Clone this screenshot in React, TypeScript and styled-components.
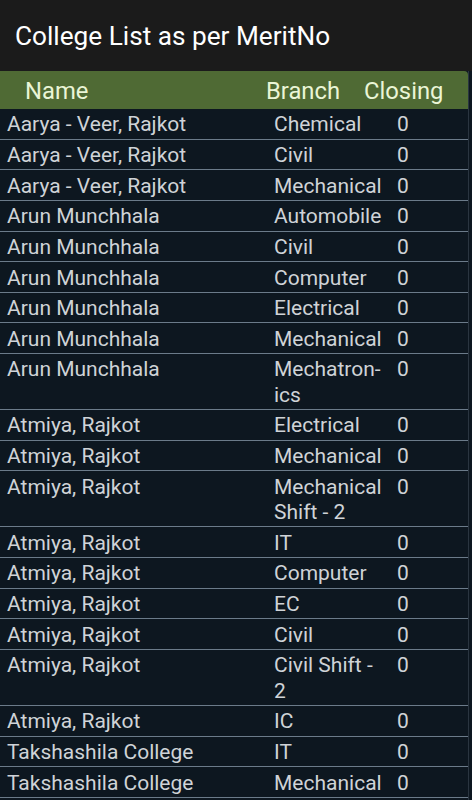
import React from "react";
import styled, { createGlobalStyle } from "styled-components";

const Global = createGlobalStyle`
  html, body { margin: 0; padding: 0; background: #0d1720; }
  body { font-family: Roboto, "Noto Sans", sans-serif; }
`;

const Page = styled.div`
  width: 472px;
  height: 800px;
  overflow: hidden;
  display: flex;
  flex-direction: column;
  background: #0d1720;
`;

const TopBar = styled.header`
  height: 71px;
  flex: none;
  background: #1b1b1b;
  display: flex;
  align-items: center;
  padding-left: 15px;
  padding-top: 1px;
  box-sizing: border-box;
`;

const Title = styled.h1`
  margin: 0;
  font-size: 26.2px;
  font-weight: 400;
  color: #ffffff;
`;

const Table = styled.div`
  flex: 1;
  display: flex;
  flex-direction: column;
  margin-right: 3px;
  border-right: 1px solid #2a3540;
`;

const Grid = styled.div`
  display: grid;
  grid-template-columns: 266px 123px 1fr;
`;

const HeadRow = styled(Grid)`
  height: 38px;
  align-items: center;
  background: #4f6a34;
  border-top-right-radius: 4px;
`;

const HeadCell = styled.div<{ $pad: number }>`
  padding-left: ${(p) => p.$pad}px;
  font-size: 23.8px;
  color: #eaf5d6;
  line-height: 28px;
  padding-top: 2px;
  white-space: nowrap;
`;

const Row = styled(Grid)`
  border-bottom: 1px solid #6b7b8a;
  padding: 3.3px 0 1px;
  background: #0d1720;
`;

const Cell = styled.div<{ $pad: number }>`
  padding-left: ${(p) => p.$pad}px;
  padding-right: 4px;
  font-size: 21px;
  line-height: 25.35px;
  color: #cfd3d7;
  word-wrap: break-word;
`;

const rows: [string, string][] = [
  ["Aarya - Veer, Rajkot", "Chemical"],
  ["Aarya - Veer, Rajkot", "Civil"],
  ["Aarya - Veer, Rajkot", "Mechanical"],
  ["Arun Munchhala", "Automobile"],
  ["Arun Munchhala", "Civil"],
  ["Arun Munchhala", "Computer"],
  ["Arun Munchhala", "Electrical"],
  ["Arun Munchhala", "Mechanical"],
  ["Arun Munchhala", "Mechatron\u00ADics"],
  ["Atmiya, Rajkot", "Electrical"],
  ["Atmiya, Rajkot", "Mechanical"],
  ["Atmiya, Rajkot", "Mechanical Shift - 2"],
  ["Atmiya, Rajkot", "IT"],
  ["Atmiya, Rajkot", "Computer"],
  ["Atmiya, Rajkot", "EC"],
  ["Atmiya, Rajkot", "Civil"],
  ["Atmiya, Rajkot", "Civil Shift - 2"],
  ["Atmiya, Rajkot", "IC"],
  ["Takshashila College", "IT"],
  ["Takshashila College", "Mechanical"],
];

export default function App() {
  return (
    <Page>
      <Global />
      <TopBar>
        <Title>College List as per MeritNo</Title>
      </TopBar>
      <Table>
        <HeadRow>
          <HeadCell $pad={25}>Name</HeadCell>
          <HeadCell $pad={0}>Branch</HeadCell>
          <HeadCell $pad={0} style={{ marginLeft: -25 }}>Closing</HeadCell>
        </HeadRow>
        {rows.map(([n, b], i) => (
          <Row key={i}>
            <Cell $pad={7}>{n}</Cell>
            <Cell $pad={8}>{b}</Cell>
            <Cell $pad={8}>0</Cell>
          </Row>
        ))}
      </Table>
    </Page>
  );
}
